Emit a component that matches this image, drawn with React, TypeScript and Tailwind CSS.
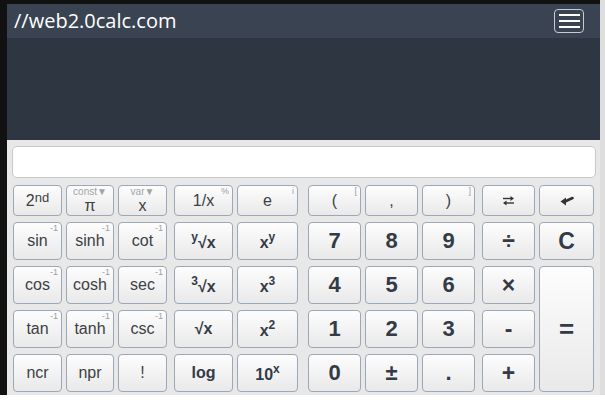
import type { ReactNode } from "react";

type Key = {
  label: ReactNode;
  sup?: string;
  top?: string;
  kind?: "fn" | "bold" | "digit" | "op";
};

const FONT = { fontFamily: '"Liberation Sans", Arial, sans-serif' };

function SwapIcon() {
  return (
    <svg width="13" height="11" viewBox="0 0 13 11" aria-hidden>
      <path d="M1 3.5 H10" stroke="#333" strokeWidth="1.4" />
      <path d="M12 3.5 L8.5 1 L8.5 6 Z" fill="#333" />
      <path d="M12 8 H3" stroke="#333" strokeWidth="1.4" />
      <path d="M1 8 L4.5 5.5 L4.5 10.5 Z" fill="#333" />
    </svg>
  );
}

function BackIcon() {
  return (
    <svg width="14" height="11" viewBox="0 0 14 11" aria-hidden>
      <path d="M0.5 6.5 L6 2.5 L6 10.5 Z" fill="#333" />
      <path d="M5 6.5 L12.5 3" stroke="#333" strokeWidth="2.6" strokeLinecap="round" />
    </svg>
  );
}

function Up({ children, bold }: { children: ReactNode; bold?: boolean }) {
  return (
    <span className={`relative top-[-7px] text-[12px] leading-none ${bold ? "font-bold" : ""}`}>
      {children}
    </span>
  );
}

const rows: Key[][] = [
  [
    { label: <span>2<span className="relative top-[-4px] text-[13px]">nd</span></span> },
    { label: "π", top: "const▼" },
    { label: "x", top: "var▼" },
    { label: "1/x", sup: "%" },
    { label: "e", sup: "i" },
    { label: "(", sup: "[" },
    { label: "," },
    { label: ")", sup: "]" },
    { label: <SwapIcon /> },
    { label: <BackIcon /> },
  ],
  [
    { label: "sin", sup: "-1" },
    { label: "sinh", sup: "-1" },
    { label: "cot", sup: "-1" },
    { label: <span className="pt-[4px]"><Up bold>y</Up>√x</span>, kind: "bold" },
    { label: <span className="pt-[4px]">x<Up>y</Up></span>, kind: "bold" },
    { label: "7", kind: "digit" },
    { label: "8", kind: "digit" },
    { label: "9", kind: "digit" },
    { label: "÷", kind: "op" },
    { label: "C", kind: "op" },
  ],
  [
    { label: "cos", sup: "-1" },
    { label: "cosh", sup: "-1" },
    { label: "sec", sup: "-1" },
    { label: <span className="pt-[4px]"><Up bold>3</Up>√x</span>, kind: "bold" },
    { label: <span className="pt-[4px]">x<Up>3</Up></span>, kind: "bold" },
    { label: "4", kind: "digit" },
    { label: "5", kind: "digit" },
    { label: "6", kind: "digit" },
    { label: "×", kind: "op" },
  ],
  [
    { label: "tan", sup: "-1" },
    { label: "tanh", sup: "-1" },
    { label: "csc", sup: "-1" },
    { label: "√x", kind: "bold" },
    { label: <span className="pt-[4px]">x<Up>2</Up></span>, kind: "bold" },
    { label: "1", kind: "digit" },
    { label: "2", kind: "digit" },
    { label: "3", kind: "digit" },
    { label: "-", kind: "op" },
  ],
  [
    { label: "ncr" },
    { label: "npr" },
    { label: "!" },
    { label: "log", kind: "bold" },
    { label: <span className="pt-[4px]">10<Up>x</Up></span>, kind: "bold" },
    { label: "0", kind: "digit" },
    { label: "±", kind: "digit" },
    { label: ".", kind: "digit" },
    { label: "+", kind: "op" },
  ],
];

const btnBase =
  "relative flex items-center justify-center rounded-[4px] border border-[#9aa8b8] bg-gradient-to-b from-[#fdfdfd] to-[#e9e9e9] text-[#3a3f47] leading-none";

function kindClass(kind?: Key["kind"]) {
  if (kind === "bold") return "text-[16px] font-bold text-[#333b47]";
  if (kind === "digit") return "text-[22px] font-bold text-[#333b47]";
  if (kind === "op") return "text-[23px] font-bold text-[#333b47]";
  return "text-[16px] text-[#3c3f44]";
}

function CalcKey({ k, col }: { k: Key; col: number }) {
  const place =
    col === 3
      ? "justify-self-end w-[59px]"
      : col === 5 || col === 8
        ? "justify-self-end w-[53px]"
        : "w-full";
  return (
    <button className={`${btnBase} ${place} ${kindClass(k.kind)}`} style={FONT}>
      {k.top ? (
        <span className="flex flex-col items-center leading-none">
          <span className="text-[10px] text-[#a0a4a8]">{k.top}</span>
          <span className="text-[16px] mt-[1px]">{k.label}</span>
        </span>
      ) : (
        k.label
      )}
      {k.sup && (
        <span className="absolute top-[1px] right-[3px] text-[9px] font-normal text-[#9a9ea4]">
          {k.sup}
        </span>
      )}
    </button>
  );
}

export default function App() {
  return (
    <div className="w-[605px] h-[404px] bg-white flex items-start">
      <div className="w-[7px] h-[395px] bg-[#111111] shrink-0" />
      <div className="w-[593px] h-[395px] flex flex-col shrink-0">
        <div className="h-[4px] shrink-0 bg-[#111111]" />
        <div className="h-[34px] shrink-0 bg-[#3a4351] flex items-center justify-between pl-[7px] pr-[16px]">
          <span
            className="text-white text-[20px] leading-none"
            style={{ fontFamily: '"Open Sans", "Noto Sans", sans-serif' }}
          >
            //web2.0calc.com
          </span>
          <div className="w-[30px] h-[24px] rounded-[4px] border border-[#c8ccd2] flex flex-col items-center justify-center gap-[4px]">
            <span className="block w-[21px] h-[2px] bg-white" />
            <span className="block w-[21px] h-[2px] bg-white" />
            <span className="block w-[21px] h-[2px] bg-white" />
          </div>
        </div>
        <div className="h-[102px] shrink-0 bg-[#2e3641]" />
        <div className="flex-1 bg-[#e8e8e8] pt-[6px]">
          <div className="ml-[5px] w-[584px] h-[32px] bg-white rounded-[5px] border border-[#c9c9c9]" />
          <div className="mt-[7px] ml-[6px] grid grid-cols-[49px_48px_49px_62px_61px_59px_53px_53px_56px_55px] grid-rows-[31px_38px_38px_38px_38px] gap-x-[4px] gap-y-[6px]">
            {rows.map((row, r) =>
              row.map((k, c) => <CalcKey key={`${r}-${c}`} k={k} col={c} />).concat(
                r === 2
                  ? [
                      <button
                        key="eq"
                        className={`${btnBase} row-span-3 w-full text-[26px] font-bold text-[#333b47]`}
                        style={FONT}
                      >
                        =
                      </button>,
                    ]
                  : []
              )
            )}
          </div>
        </div>
      </div>
      <div className="w-[5px] h-[395px] bg-[#dedede] shrink-0" />
    </div>
  );
}
